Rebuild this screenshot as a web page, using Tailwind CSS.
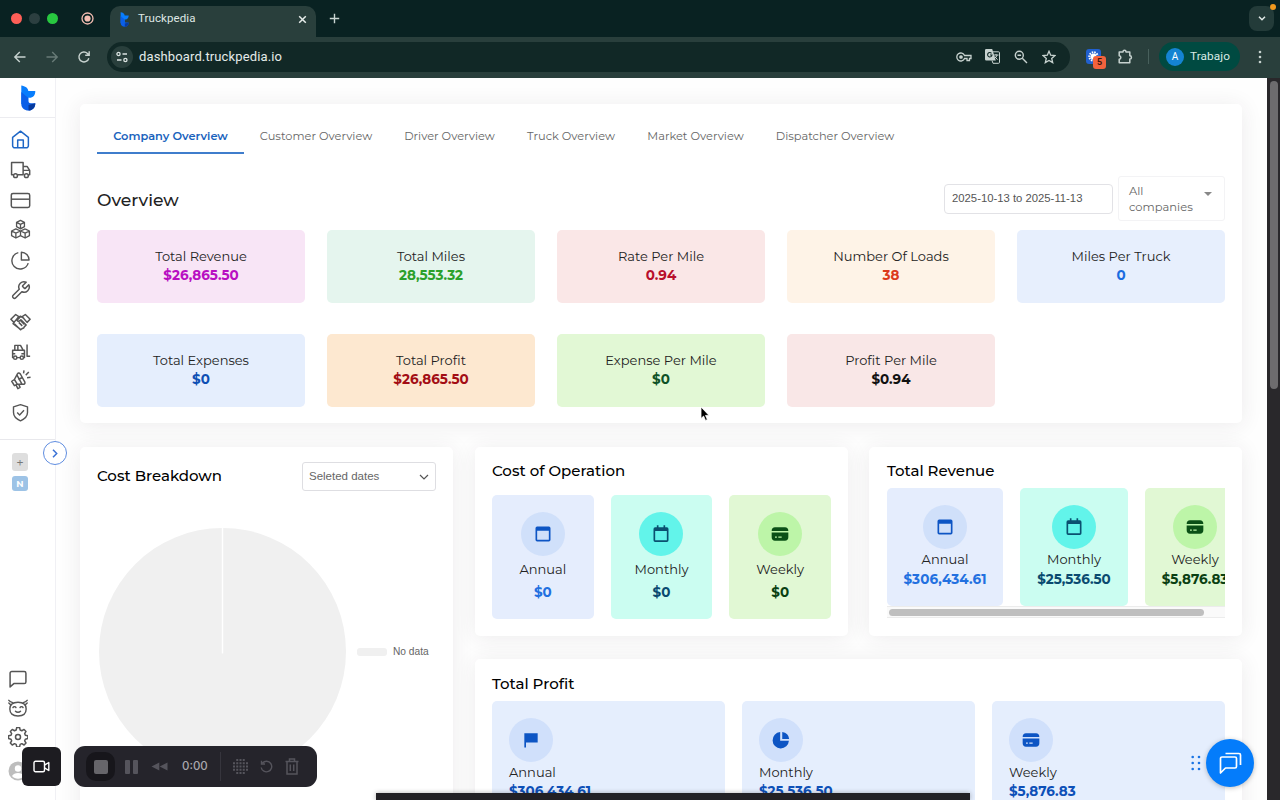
<!DOCTYPE html>
<html lang="en">
<head>
    <meta charset="UTF-8">
    <meta name="viewport" content="width=device-width, initial-scale=1.0">
    <title>Truckpedia</title>
    <script src="https://cdn.jsdelivr.net/npm/@tailwindcss/browser@4"></script>
</head>
<body class="relative flex h-screen w-screen flex-col overflow-hidden bg-white font-[Montserrat,Inter,sans-serif] text-[#222]">
    <!-- shared icons -->
    <svg class="hidden">
        <symbol id="logo" viewBox="0 0 16 26">
            <path d="M1.300 .5C5 1 8.300 3 8.300 6H15.300c0 4-2 6.800-6 6.800H8.300V19h-7z" fill="#087dfc"/>
            <path d="M1.300 7l7 6v2.500c0 1.800 .8 2.700 2.500 2.700H15.300c0 4.300-2.700 7.300-6.800 7.300S1.300 23 1.300 19z" fill="#0b5fe8"/>
            <path d="M8.500 20l6.800-1.800c0 4.300-2.700 7.300-6.800 7.300z" fill="#063a9e"/>
        </symbol>
        <symbol id="cal" viewBox="0 0 24 24"><path fill="currentColor" fill-rule="evenodd" d="M5 3h14a2 2 0 0 1 2 2v14a2 2 0 0 1-2 2H5a2 2 0 0 1-2-2V5a2 2 0 0 1 2-2zm0 5v11h14V8z"/></symbol>
        <symbol id="cal2" viewBox="0 0 24 24"><path fill="currentColor" fill-rule="evenodd" d="M7 1.500h2V4h6V1.500h2V4h2a2 2 0 0 1 2 2v13.500a2 2 0 0 1-2 2H5a2 2 0 0 1-2-2V6a2 2 0 0 1 2-2h2zM5 8.500v11h14v-11z"/></symbol>
        <symbol id="card" viewBox="0 0 24 24"><path fill="currentColor" fill-rule="evenodd" d="M2 8.500C2 5.500 3.500 4 6 4h12c2.500 0 4 1.500 4 4.500zM2 10.200h20V16c0 2.700-1.500 4-4 4H6c-2.500 0-4-1.300-4-4zm4 4.800v1.500h2.200V15zm4 0v1.500h4V15z"/></symbol>
    </svg>

    <!-- tab strip -->
    <div class="flex h-[37px] shrink-0 items-center bg-[#092222]">
        <div class="flex w-[110px] items-center gap-[7px] pl-[11px]">
            <span class="size-[11px] rounded-full bg-[#fe5f57]"></span>
            <span class="size-[11px] rounded-full bg-[#2c3f40]"></span>
            <span class="size-[11px] rounded-full bg-[#28c840]"></span>
            <svg class="ml-[16px] size-[13px]" viewBox="0 0 13 13"><circle cx="6.500" cy="6.500" r="5.500" fill="none" stroke="#f3bdb2" stroke-width="1.300"/><circle cx="6.500" cy="6.500" r="3.100" fill="#f3bdb2"/></svg>
        </div>
        <div class="mt-[6px] flex h-[31px] w-[206px] items-center rounded-t-[10px] bg-[#293f3c] pr-[9px] pb-[5px] pl-[9px]">
            <svg class="h-[15px] w-[11px]"><use href="#logo"/></svg>
            <span class="ml-[8px] grow font-[Roboto] text-[11.500px] tracking-[0.1px] text-[#dfe7e5]">Truckpedia</span>
            <svg class="size-[9px]" viewBox="0 0 9 9" stroke="#e6ecea" stroke-width="1.500"><path d="M1.200 1.200l6.600 6.600M7.800 1.200L1.200 7.800"/></svg>
        </div>
        <svg class="ml-[13px] size-[11px]" viewBox="0 0 11 11" stroke="#c9d5d2" stroke-width="1.400"><path d="M5.500 .8v9.400M.8 5.500h9.400"/></svg>
        <div class="mr-[6px] ml-auto flex size-[25px] items-center justify-center rounded-[8px] bg-[#233b39]">
            <svg class="h-[5px] w-[8px]" viewBox="0 0 8 5" fill="none" stroke="#e0e8e6" stroke-width="1.500"><path d="M1 .8l3 3 3-3"/></svg>
        </div>
    </div>
    <span class="absolute top-[4px] left-[1270px] size-[6px] rounded-full bg-[#f0981e]"></span>

    <!-- toolbar -->
    <div class="flex h-[41px] shrink-0 items-center bg-[#293f3c] pr-[13px] pb-[2px] pl-[13px] text-[#c7d2cf]">
        <svg class="size-[14px]" viewBox="0 0 14 14" fill="none" stroke="currentColor" stroke-width="1.400"><path d="M12.500 7H2M6.800 2L1.800 7l5 5"/></svg>
        <svg class="ml-[18px] size-[14px] text-[#687b77]" viewBox="0 0 14 14" fill="none" stroke="currentColor" stroke-width="1.400"><path d="M1.500 7H12M7.200 2l5 5-5 5"/></svg>
        <svg class="ml-[18px] size-[14px]" viewBox="0 0 14 14" fill="none" stroke="currentColor" stroke-width="1.400"><path d="M11.800 8.200A5 5 0 1 1 10.500 3.400L12 5M12.200 1.200V5.200H8.200"/></svg>
        <div class="ml-[16px] flex h-[30px] w-[963px] items-center rounded-full bg-[#112826] pr-[14px] pl-[4px]">
            <span class="flex size-[22px] items-center justify-center rounded-full bg-[#293f3c]">
                <svg class="size-[12px]" viewBox="0 0 12 12" fill="none" stroke="#dbe4e2" stroke-width="1.300"><circle cx="2.500" cy="3" r="1.600"/><path d="M6.500 3H11M1 9h4.500"/><circle cx="9.400" cy="9" r="1.600"/></svg>
            </span>
            <span class="ml-[6px] grow font-[Roboto] text-[13px] tracking-[0.13px] text-[#e4ebe9]">dashboard.truckpedia.io</span>
            <svg class="h-[10px] w-[16px]" viewBox="0 0 16 10" fill="none" stroke="currentColor" stroke-width="1.300"><path d="M8.500 3.500H15v3h-1.500v2h-2.500v-2H8.500A4 4 0 1 1 8.500 3.500z"/><circle cx="5" cy="5" r="1.200" fill="currentColor"/></svg>
            <svg class="ml-[13px] size-[15px]" viewBox="0 0 15 15"><path d="M1.200 0h6l3.600 11.500H1.200A1.200 1.200 0 0 1 0 10.300V1.200A1.200 1.200 0 0 1 1.200 0z" fill="currentColor"/><path d="M8 2.800h5.500a1 1 0 0 1 1 1v9.500a1 1 0 0 1-1 1H8L7 11.500M8.800 6h4.700M11 5v1M9.200 9.500c1.500-.7 2.500-2 3-3.500M9.800 7.500l2.700 3.200" fill="none" stroke="currentColor"/><path d="M6.500 4.300A2.200 2.200 0 1 0 7 6H5" fill="none" stroke="#112826" stroke-width="1.100"/></svg>
            <svg class="ml-[14px] size-[14px]" viewBox="0 0 14 14" fill="none" stroke="currentColor" stroke-width="1.400"><circle cx="5.300" cy="5.300" r="4"/><path d="M8.300 8.300l4.700 4.700M3.500 5.300h3.600"/></svg>
            <svg class="ml-[14px] size-[14px]" viewBox="0 0 14 14" fill="none" stroke="currentColor" stroke-width="1.300"><path d="M7 1.300l1.700 3.900 4.200.4-3.200 2.800 1 4.200L7 10.400l-3.700 2.200 1-4.200L1.100 5.600l4.200-.4z"/></svg>
        </div>
        <div class="relative ml-[16px] size-[15px] rounded-[3px] bg-[#2160cf]">
            <svg class="size-[15px]" viewBox="0 0 15 15"><circle cx="7.500" cy="7.500" r="4.200" fill="none" stroke="#fff" stroke-width="2" stroke-dasharray="1.500 1"/><circle cx="7.500" cy="7.500" r="3" fill="#fff"/></svg>
            <span class="absolute top-[7px] left-[7px] flex h-[13px] w-[13px] items-center justify-center rounded-[3px] bg-[#f3623d] font-[Roboto] text-[9px] font-bold text-[#40150c]">5</span>
        </div>
        <svg class="ml-[16px] size-[16px]" viewBox="0 0 16 16" fill="none" stroke="currentColor" stroke-width="1.500" stroke-linejoin="round"><path d="M2.200 3H6c0-2.200 3-2.200 3 0h3.800v3.800c2.200 0 2.200 3.200 0 3.200v3.800H2.200V10.300c2.200-.4 2.200-3.200 0-3.600z"/></svg>
        <span class="ml-[15px] h-[15px] w-px bg-[#48605c]"></span>
        <div class="ml-[10px] flex h-[29px] w-[81px] items-center rounded-full bg-[#004a41] pl-[7px]">
            <span class="flex size-[18px] items-center justify-center rounded-full bg-[#1484d2] font-[Roboto] text-[10px] text-white">A</span>
            <span class="ml-[6px] font-[Roboto] text-[11.800px] tracking-[0.1px] text-[#d8eae6]">Trabajo</span>
        </div>
        <svg class="ml-[18px] h-[14px] w-[4px] shrink-0" viewBox="0 0 4 14" fill="currentColor"><circle cx="2" cy="2" r="1.300"/><circle cx="2" cy="7" r="1.300"/><circle cx="2" cy="12" r="1.300"/></svg>
    </div>

    <!-- page -->
    <div class="flex min-h-0 grow">
        <aside class="relative flex w-[56px] shrink-0 flex-col border-r border-[#f0f0f4] text-[#555]">
            <div class="flex h-[40px] shrink-0 items-center border-b border-[#ececf0] pl-[20px]">
                <svg class="h-[26px] w-[16px]"><use href="#logo"/></svg>
            </div>
            <nav class="flex h-[322px] shrink-0 flex-col gap-[9.300px] border-b border-[#e8e8ec] pt-[11px] pl-[10px]">
                <svg class="size-[21px] shrink-0 text-[#1f67c6]" viewBox="0 0 24 24" fill="none" stroke="currentColor" stroke-width="1.700" stroke-linejoin="round"><path d="M3 9.500L12 2.500l9 7V19a2.500 2.500 0 0 1-2.500 2.500h-13A2.500 2.500 0 0 1 3 19z"/><path d="M8.800 21.500V12.500h6.400v9"/></svg>
                <svg class="size-[21px] shrink-0" viewBox="0 0 24 24" fill="none" stroke="currentColor" stroke-width="1.700" stroke-linejoin="round"><path d="M4 18H1.800V4H15v14H8.500M15 8.500h4.500L22.500 13v5h-1.500M15 13h7.500"/><circle cx="6.300" cy="19" r="2.200"/><circle cx="18.700" cy="19" r="2.200"/></svg>
                <svg class="size-[21px] shrink-0" viewBox="0 0 24 24" fill="none" stroke="currentColor" stroke-width="1.700"><rect x="1.500" y="4" width="21" height="16" rx="2"/><path d="M1.500 10.500h21"/></svg>
                <svg class="-mt-[1px] mb-[1px] size-[21px] shrink-0" viewBox="0 0 24 24" fill="none" stroke="currentColor" stroke-width="1.500" stroke-linejoin="round"><path d="M12 1.500l4.500 2.300v5L12 11.200 7.500 8.800v-5zM7.500 3.800L12 6.200l4.500-2.400M12 6.200v5M6.700 11.200l5.300 2.500v5.300l-5.300 2.700-4.900-2.700v-5.300zM1.800 13.700l4.900 2.500L12 13.700M6.700 16.200v5.500M17.300 11.200l4.900 2.500v5.300l-4.900 2.700-5.300-2.700M12 13.700l5.300 2.500 4.900-2.500M12 13.700l5.300-2.500M17.300 16.200v5.500"/></svg>
                <svg class="size-[21px] shrink-0" viewBox="0 0 24 24" fill="none" stroke="currentColor" stroke-width="1.600" stroke-linejoin="round"><path d="M9.500 3A9.500 9.500 0 1 0 20.800 15"/><path d="M13 2.500V11.500h8.800A9 9 0 0 0 13 2.500z"/></svg>
                <svg class="size-[21px] shrink-0" viewBox="0 0 24 24" fill="none" stroke="currentColor" stroke-width="1.700" stroke-linejoin="round"><path d="M14.700 6.300a1 1 0 0 0 0 1.400l1.600 1.600a1 1 0 0 0 1.400 0l3.770-3.770a6 6 0 0 1-7.940 7.940l-6.910 6.910a2.120 2.120 0 0 1-3-3l6.910-6.910a6 6 0 0 1 7.940-7.940l-3.760 3.760z"/></svg>
                <svg class="size-[21px] shrink-0" viewBox="0 0 24 24" fill="none" stroke="currentColor" stroke-width="1.700" stroke-linejoin="round"><path d="M1 9.500L6.500 4 10 6.500 4.500 13zM23 9.500L17.500 4 14 6.500l5.500 6.500zM8.500 7.500L12 6l4 2.500M12 6.500l-4 4c1 2 3 1.500 4.500-.5l6 6-2 1.800-1 1.700-2 .8-1.500 1.200-7-7M5 12.500l-1.500 2 8.500 6.500M10 13l4 4M12.500 11.500l4 4"/></svg>
                <svg class="size-[21px] shrink-0" viewBox="0 0 24 24" fill="none" stroke="currentColor" stroke-width="1.700" stroke-linejoin="round"><path d="M5.500 10.500V5h6.500l3 5.500M9 5v5.500M3 10.500h13.500V19H3zM19.500 4v13.500H23M3 14.500h3M13 14.500h3.500"/><circle cx="6" cy="19" r="1.900" fill="#fff"/><circle cx="13.500" cy="19" r="1.900" fill="#fff"/></svg>
                <svg class="-mt-[2px] mb-[2px] size-[21px] shrink-0" viewBox="0 0 24 24" fill="none" stroke="currentColor" stroke-width="1.700" stroke-linejoin="round"><path d="M8.500 5.500c1-1.500 2.500-1 3.500.5l5 9c.5 1.500-.5 2.500-2 2.500H8l-3 1.500-3-5 3-2zM5 12l3.500 5.500M8 7l5.500 10M9.500 12l4-2M7 18.500l2 4 2.500-1.500-1.500-3.500M15.500 5l.5-3.500M18 7l3.500-3.500M19.500 10l4-.5"/></svg>
                <svg class="size-[21px] shrink-0" viewBox="0 0 24 24" fill="none" stroke="currentColor" stroke-width="1.600" stroke-linejoin="round"><path d="M12 3l8 2.500V12c0 4.500-3.500 7.500-8 9.500-4.500-2-8-5-8-9.500V5.500zM8.200 12l2.800 2.800 5-5.300"/></svg>
            </nav>
            <div class="flex flex-col gap-[5px] pt-[13px] pl-[12px]">
                <span class="flex h-[18px] w-[16px] items-center justify-center rounded-[3px] bg-[#dedede] text-[13px] leading-none text-[#777]">+</span>
                <span class="flex h-[15px] w-[16px] items-center justify-center rounded-[3px] bg-[#9dc3e6] text-[9px] leading-none font-bold text-white">N</span>
            </div>
            <div class="mt-auto flex flex-col gap-[9px] pb-[19px] pl-[8px]">
                <svg class="size-[20px]" viewBox="0 0 24 24" fill="none" stroke="currentColor" stroke-width="1.800" stroke-linejoin="round"><path d="M4.500 3h15a2 2 0 0 1 2 2v10.500a2 2 0 0 1-2 2H7l-4.500 4V5a2 2 0 0 1 2-2z"/></svg>
                <svg class="size-[20px]" viewBox="0 0 24 24" fill="none" stroke="currentColor" stroke-width="1.700" stroke-linecap="round"><path d="M12 5c6.500 0 9.800 3 9.800 8.200S18.500 21.500 12 21.500s-9.800-3-9.800-8.300S5.500 5 12 5zM1 2.800c1 1.500 2.800 2 5.500 3M3.500 8.500L1 6M23 2.800c-1 1.500-2.800 2-5.500 3M20.500 8.500L23 6M6 11.500c.5-1.500 3-1.500 3.500 0M14.500 11.500c.5-1.500 3-1.500 3.500 0M9 15.800c1.500 1.700 4.500 1.700 6 0"/></svg>
                <svg class="size-[20px]" viewBox="0 0 24 24" fill="none" stroke="currentColor" stroke-width="1.800" stroke-linejoin="round"><path d="M10.300 1.800h3.400l.7 3 2 .9 2.700-1.600 2.300 2.400-1.600 2.600.8 2 3 .7v3.300l-3 .7-.8 2 1.600 2.600-2.300 2.400-2.700-1.600-2 .9-.7 3h-3.400l-.7-3-2-.9-2.700 1.600-2.300-2.400 1.600-2.600-.8-2-3-.7v-3.300l3-.7.8-2-1.600-2.600 2.300-2.400 2.700 1.600 2-.9z" transform="translate(.2 -1.200)"/><circle cx="12" cy="12" r="3"/></svg>
                <svg class="mt-[5px] size-[20px]" viewBox="0 0 20 20"><circle cx="10" cy="10" r="9.500" fill="#bdbdbd"/><circle cx="10" cy="7.500" r="3.200" fill="#fff"/><path d="M4 15c2-4 10-4 12 0-3 3.500-9 3.500-12 0z" fill="#fff"/></svg>
            </div>
            <!-- expand button sits on the border -->
            <button class="absolute top-[363px] left-[43px] flex size-[24px] items-center justify-center rounded-full border border-[#5f8de0] bg-white">
                <svg class="h-[9px] w-[6px]" viewBox="0 0 6 9" fill="none" stroke="#3a72d6" stroke-width="1.500"><path d="M1 .8l3.700 3.700L1 8.200"/></svg>
            </button>
        </aside>

        <main class="min-w-0 grow overflow-hidden bg-[#fefefe] pt-[26px] pr-[25px] pl-[24px]">
            <section class="h-[319px] rounded-[5px] bg-white px-[17px] pt-[13px] shadow-[0_2px_22px_rgba(60,40,60,0.09)]">
                <div class="flex h-[37px] text-[11.400px] leading-[18px] text-[#666]">
                    <div class="w-[147px] border-b-2 border-[#3f7dcc] pt-[10px] text-center font-semibold text-[#1a63bd]">Company Overview</div>
                    <div class="w-[144px] pt-[10px] text-center">Customer Overview</div>
                    <div class="w-[123px] pt-[10px] text-center">Driver Overview</div>
                    <div class="w-[120px] pt-[10px] text-center">Truck Overview</div>
                    <div class="w-[129px] pt-[10px] text-center">Market Overview</div>
                    <div class="w-[150px] pt-[10px] text-center">Dispatcher Overview</div>
                </div>
                <div class="mt-[22px] flex h-[45px] items-center">
                    <h2 class="grow pt-[2px] text-[17.200px] font-medium">Overview</h2>
                    <div class="flex h-[30px] w-[169px] items-center rounded-[4px] border border-[#e2e2e6] pl-[7px] font-['Liberation_Sans'] text-[11.300px] text-[#555]">2025-10-13 to 2025-11-13</div>
                    <div class="ml-[5px] flex h-[45px] w-[107px] justify-between rounded-[3px] border border-[#f3f3f5] pt-[6px] pr-[12px] pl-[10px] text-[11.500px] leading-[16px] text-[#666]">
                        <span class="w-[66px]">All companies</span>
                        <svg class="mt-[9px] h-[4px] w-[8px]" viewBox="0 0 8 4"><path d="M0 0h8L4 4z" fill="#888"/></svg>
                    </div>
                </div>
                <div class="mt-[9px] grid grid-cols-5 gap-x-[22px] gap-y-[31px] text-center text-[13px] leading-[19px]">
                    <div class="h-[73px] rounded-[5px] bg-[#f8e5f6] pt-[17px]"><p>Total Revenue</p><p class="text-[13.500px] font-bold text-[#b80fc2]">$26,865.50</p></div>
                    <div class="h-[73px] rounded-[5px] bg-[#e5f5ee] pt-[17px]"><p>Total Miles</p><p class="text-[13.500px] font-bold text-[#2ba02b]">28,553.32</p></div>
                    <div class="h-[73px] rounded-[5px] bg-[#fae7e7] pt-[17px]"><p>Rate Per Mile</p><p class="text-[13.500px] font-bold text-[#b80f2c]">0.94</p></div>
                    <div class="h-[73px] rounded-[5px] bg-[#fef3e7] pt-[17px]"><p>Number Of Loads</p><p class="text-[13.500px] font-bold text-[#dc3a1c]">38</p></div>
                    <div class="h-[73px] rounded-[5px] bg-[#e7effd] pt-[17px]"><p>Miles Per Truck</p><p class="text-[13.500px] font-bold text-[#1a6ce0]">0</p></div>
                    <div class="h-[73px] rounded-[5px] bg-[#e5eefd] pt-[17px]"><p>Total Expenses</p><p class="text-[13.500px] font-bold text-[#0e4fb4]">$0</p></div>
                    <div class="h-[73px] rounded-[5px] bg-[#fde8d0] pt-[17px]"><p>Total Profit</p><p class="text-[13.500px] font-bold text-[#a30d14]">$26,865.50</p></div>
                    <div class="h-[73px] rounded-[5px] bg-[#e2f8d5] pt-[17px]"><p>Expense Per Mile</p><p class="text-[13.500px] font-bold text-[#0e5227]">$0</p></div>
                    <div class="h-[73px] rounded-[5px] bg-[#f9e7e7] pt-[17px]"><p>Profit Per Mile</p><p class="text-[13.500px] font-bold text-[#111]">$0.94</p></div>
                </div>
            </section>

            <div class="mt-[24px] flex gap-[22px]">
                <section class="h-[420px] w-[373px] shrink-0 rounded-[5px] bg-white px-[17px] pt-[15px] shadow-[0_2px_22px_rgba(60,40,60,0.09)]">
                    <div class="flex h-[29px] items-center justify-between">
                        <h3 class="text-[15px] font-medium text-black">Cost Breakdown</h3>
                        <div class="flex h-[29px] w-[134px] items-center justify-between rounded-[3px] border border-[#dedee2] pr-[6px] pl-[6px] font-['Liberation_Sans'] text-[11.500px] text-[#666]">
                            Seleted dates
                            <svg class="h-[6px] w-[10px]" viewBox="0 0 10 6" fill="none" stroke="#555" stroke-width="1.200"><path d="M1 1l4 4 4-4"/></svg>
                        </div>
                    </div>
                    <div class="mt-[37px] flex items-center">
                        <svg class="ml-[2px] size-[247px]" viewBox="0 0 248 248"><circle cx="124" cy="124" r="124" fill="#f0f0f0"/><path d="M124 0v126" stroke="#fff" stroke-width="1.500"/></svg>
                        <span class="ml-[11px] h-[8px] w-[30px] rounded-[3px] bg-[#f0f0f0]"></span>
                        <span class="ml-[6px] font-['Liberation_Sans'] text-[10.200px] text-[#666]">No data</span>
                    </div>
                </section>

                <div class="grid grow grid-cols-2 content-start gap-x-[21px] gap-y-[23px]">
                    <section class="h-[189px] rounded-[5px] bg-white px-[17px] pt-[13px] shadow-[0_2px_22px_rgba(60,40,60,0.09)]">
                        <h3 class="text-[15px] leading-[22px] font-medium text-black">Cost of Operation</h3>
                        <div class="mt-[13px] grid grid-cols-3 gap-[17px] text-center text-[13px] leading-[20px]">
                            <div class="flex h-[124px] flex-col items-center rounded-[5px] bg-[#e5edfd] pt-[17px]">
                                <span class="flex size-[44px] items-center justify-center rounded-full bg-[#d0e0fa] text-[#0d55c4]"><svg class="size-[20px]"><use href="#cal"/></svg></span>
                                <p class="mt-[3px]">Annual</p><p class="mt-[3px] text-[13.500px] font-bold text-[#2270e0]">$0</p>
                            </div>
                            <div class="flex h-[124px] flex-col items-center rounded-[5px] bg-[#cbfdf1] pt-[17px]">
                                <span class="flex size-[44px] items-center justify-center rounded-full bg-[#62f4ea] text-[#0a5070]"><svg class="size-[20px]"><use href="#cal2"/></svg></span>
                                <p class="mt-[3px]">Monthly</p><p class="mt-[3px] text-[13.500px] font-bold text-[#0a4a70]">$0</p>
                            </div>
                            <div class="flex h-[124px] flex-col items-center rounded-[5px] bg-[#e1f8d4] pt-[17px]">
                                <span class="flex size-[44px] items-center justify-center rounded-full bg-[#bdf5a8] text-[#0a5016]"><svg class="size-[20px]"><use href="#card"/></svg></span>
                                <p class="mt-[3px]">Weekly</p><p class="mt-[3px] text-[13.500px] font-bold text-[#0a4012]">$0</p>
                            </div>
                        </div>
                    </section>

                    <section class="h-[189px] rounded-[5px] bg-white pt-[13px] pr-[17px] pl-[18px] shadow-[0_2px_22px_rgba(60,40,60,0.09)]">
                        <h3 class="text-[15px] leading-[22px] font-medium text-black">Total Revenue</h3>
                        <div class="mt-[6px] flex gap-[17px] overflow-hidden text-center text-[13px] leading-[20px]">
                            <div class="flex h-[118px] w-[116px] shrink-0 flex-col items-center rounded-[5px] bg-[#e5edfd] pt-[17px]">
                                <span class="flex size-[44px] items-center justify-center rounded-full bg-[#d0e0fa] text-[#0d55c4]"><svg class="size-[20px]"><use href="#cal"/></svg></span>
                                <p>Annual</p><p class="text-[13.500px] font-bold tracking-[0.1px] text-[#2270e0]">$306,434.61</p>
                            </div>
                            <div class="flex h-[118px] w-[108px] shrink-0 flex-col items-center rounded-[5px] bg-[#cbfdf1] pt-[17px]">
                                <span class="flex size-[44px] items-center justify-center rounded-full bg-[#62f4ea] text-[#0a5070]"><svg class="size-[20px]"><use href="#cal2"/></svg></span>
                                <p>Monthly</p><p class="text-[13.500px] font-bold text-[#0a4a70]">$25,536.50</p>
                            </div>
                            <div class="flex h-[118px] w-[100px] shrink-0 flex-col items-center rounded-[5px] bg-[#e1f8d4] pt-[17px]">
                                <span class="flex size-[44px] items-center justify-center rounded-full bg-[#bdf5a8] text-[#0a5016]"><svg class="size-[20px]"><use href="#card"/></svg></span>
                                <p>Weekly</p><p class="text-[13.500px] font-bold text-[#0a4012]">$5,876.83</p>
                            </div>
                        </div>
                        <div class="flex h-[12px] items-center border-y border-[#ececec] bg-[#fafafa] pl-[2px]"><span class="h-[7px] w-[315px] rounded-full bg-[#bfbfbf]"></span></div>
                    </section>

                    <section class="col-span-2 h-[200px] rounded-[5px] bg-white px-[17px] pt-[14px] shadow-[0_2px_22px_rgba(60,40,60,0.09)]">
                        <h3 class="text-[15px] leading-[22px] font-medium text-black">Total Profit</h3>
                        <div class="mt-[6px] grid grid-cols-3 gap-[17px] text-[13px] leading-[19px]">
                            <div class="h-[130px] rounded-[5px] bg-[#e5eefd] px-[17px] pt-[17px]">
                                <span class="flex size-[44px] items-center justify-center rounded-full bg-[#d0e0fb] text-[#0d55c4]"><svg class="size-[20px]" viewBox="0 0 24 24" fill="currentColor"><path d="M4 4h16v11H6v6H4z"/></svg></span>
                                <p class="mt-px">Annual</p><p class="text-[13.500px] font-bold text-[#0d50b8]">$306,434.61</p>
                            </div>
                            <div class="h-[130px] rounded-[5px] bg-[#e5eefd] px-[17px] pt-[17px]">
                                <span class="flex size-[44px] items-center justify-center rounded-full bg-[#d0e0fb] text-[#0d55c4]"><svg class="size-[20px]" viewBox="0 0 24 24" fill="currentColor"><path d="M11 2.500V13h10.500A9.800 9.800 0 1 1 11 2.500z"/><path d="M13.500 2.300V10.700h8.300A9.500 9.500 0 0 0 13.500 2.300z"/></svg></span>
                                <p class="mt-px">Monthly</p><p class="text-[13.500px] font-bold text-[#0d50b8]">$25,536.50</p>
                            </div>
                            <div class="h-[130px] rounded-[5px] bg-[#e5eefd] px-[17px] pt-[17px]">
                                <span class="flex size-[44px] items-center justify-center rounded-full bg-[#d0e0fb] text-[#0d55c4]"><svg class="size-[20px]"><use href="#card"/></svg></span>
                                <p class="mt-px">Weekly</p><p class="text-[13.500px] font-bold text-[#0d50b8]">$5,876.83</p>
                            </div>
                        </div>
                    </section>
                </div>
            </div>
        </main>

        <!-- page scrollbar -->
        <div class="w-[13px] shrink-0 bg-[#29282b] pt-[3px] pl-[3px]"><div class="h-[308px] w-[8px] rounded-full bg-[#6d6c6e]"></div></div>
    </div>

    <!-- screen recorder -->
    <div class="absolute top-[747px] left-[22px] flex size-[39px] items-center justify-center rounded-[6px] bg-[#1d1c21]">
        <svg class="h-[13px] w-[17px]" viewBox="0 0 17 13" fill="none" stroke="#fff" stroke-width="1.400" stroke-linejoin="round"><rect x="1" y="1.200" width="10.500" height="10.500" rx="1.500"/><path d="M11.500 5.200l4.300-2.700v8l-4.300-2.700"/></svg>
    </div>
    <div class="absolute top-[746px] left-[74px] flex h-[41px] w-[243px] items-center rounded-[11px] bg-[#25242b] pl-[12px] text-[#55545c]">
        <span class="flex size-[29px] items-center justify-center rounded-[10px] bg-[#17161b]"><span class="size-[14px] rounded-[2px] bg-[#66656a]"></span></span>
        <span class="ml-[10px] flex gap-[3px]"><i class="h-[14px] w-[5px] rounded-[1px] bg-[#55545c]"></i><i class="h-[14px] w-[5px] rounded-[1px] bg-[#55545c]"></i></span>
        <svg class="ml-[13px] h-[9px] w-[17px]" viewBox="0 0 17 9" fill="currentColor"><path d="M8.300 .5v8L.5 4.500zM16.500 .5v8L8.700 4.500z"/></svg>
        <span class="ml-[14px] w-[26px] font-[Inter] text-[11.500px] font-medium text-[#a9a8ae]">0:00</span>
        <span class="ml-[12px] h-[29px] w-px bg-[#36353d]"></span>
        <svg class="ml-[12px] size-[15px]" viewBox="0 0 15 15" fill="none" stroke="currentColor" stroke-width="2" stroke-dasharray="2 1.250"><path d="M4.250 0v15M7.500 0v15M10.750 0v15M0 4.250h15M0 7.500h15M0 10.750h15"/></svg>
        <svg class="ml-[12px] size-[13px]" viewBox="0 0 13 13" fill="none" stroke="currentColor" stroke-width="1.400"><path d="M2.500 3A5.300 5.300 0 1 1 1.200 7.500M1.500 .8V4h3.500"/></svg>
        <svg class="ml-[12px] h-[17px] w-[14px]" viewBox="0 0 14 17" fill="none" stroke="currentColor" stroke-width="1.500"><path d="M.5 3.500h13M4.500 3.500V1h5v2.500M2 3.500v12.500h10V3.500M5.300 6.500v6.500M8.700 6.500v6.500"/></svg>
    </div>
    <div class="absolute top-[793px] left-[376px] h-[7px] w-[594px] bg-[#222125] shadow-[0_0_5px_rgba(0,0,0,0.3)]"></div>

    <!-- chat launcher -->
    <svg class="absolute top-[755px] left-[1190px] h-[16px] w-[12px]" viewBox="0 0 12 16" fill="#1b74e4"><circle cx="2.700" cy="2" r="1.300"/><circle cx="9" cy="2" r="1.300"/><circle cx="2.700" cy="8" r="1.300"/><circle cx="9" cy="8" r="1.300"/><circle cx="2.700" cy="14" r="1.300"/><circle cx="9" cy="14" r="1.300"/></svg>
    <div class="absolute top-[739px] left-[1206px] flex size-[48px] items-center justify-center rounded-full bg-[#047cfb] shadow-[0_1px_5px_rgba(0,0,0,0.25)]">
        <svg class="size-[23px]" viewBox="0 0 23 23" fill="none" stroke="#fff" stroke-width="1.700" stroke-linejoin="round"><path d="M3 5h13a1.500 1.500 0 0 1 1.500 1.500v8A1.500 1.500 0 0 1 16 16H6.500L1.500 21V6.500A1.500 1.500 0 0 1 3 5zM6.500 1.500H20A1.500 1.500 0 0 1 21.500 3v10"/></svg>
    </div>

    <!-- pointer -->
    <svg class="absolute top-[406px] left-[700px] h-[16px] w-[10px]" viewBox="0 0 10 16"><path d="M1 1v11.500l2.600-2.400 1.900 4.300 1.900-.8-1.900-4.200H9z" fill="#000" stroke="#fff" stroke-width=".8"/></svg>
</body>
</html>
